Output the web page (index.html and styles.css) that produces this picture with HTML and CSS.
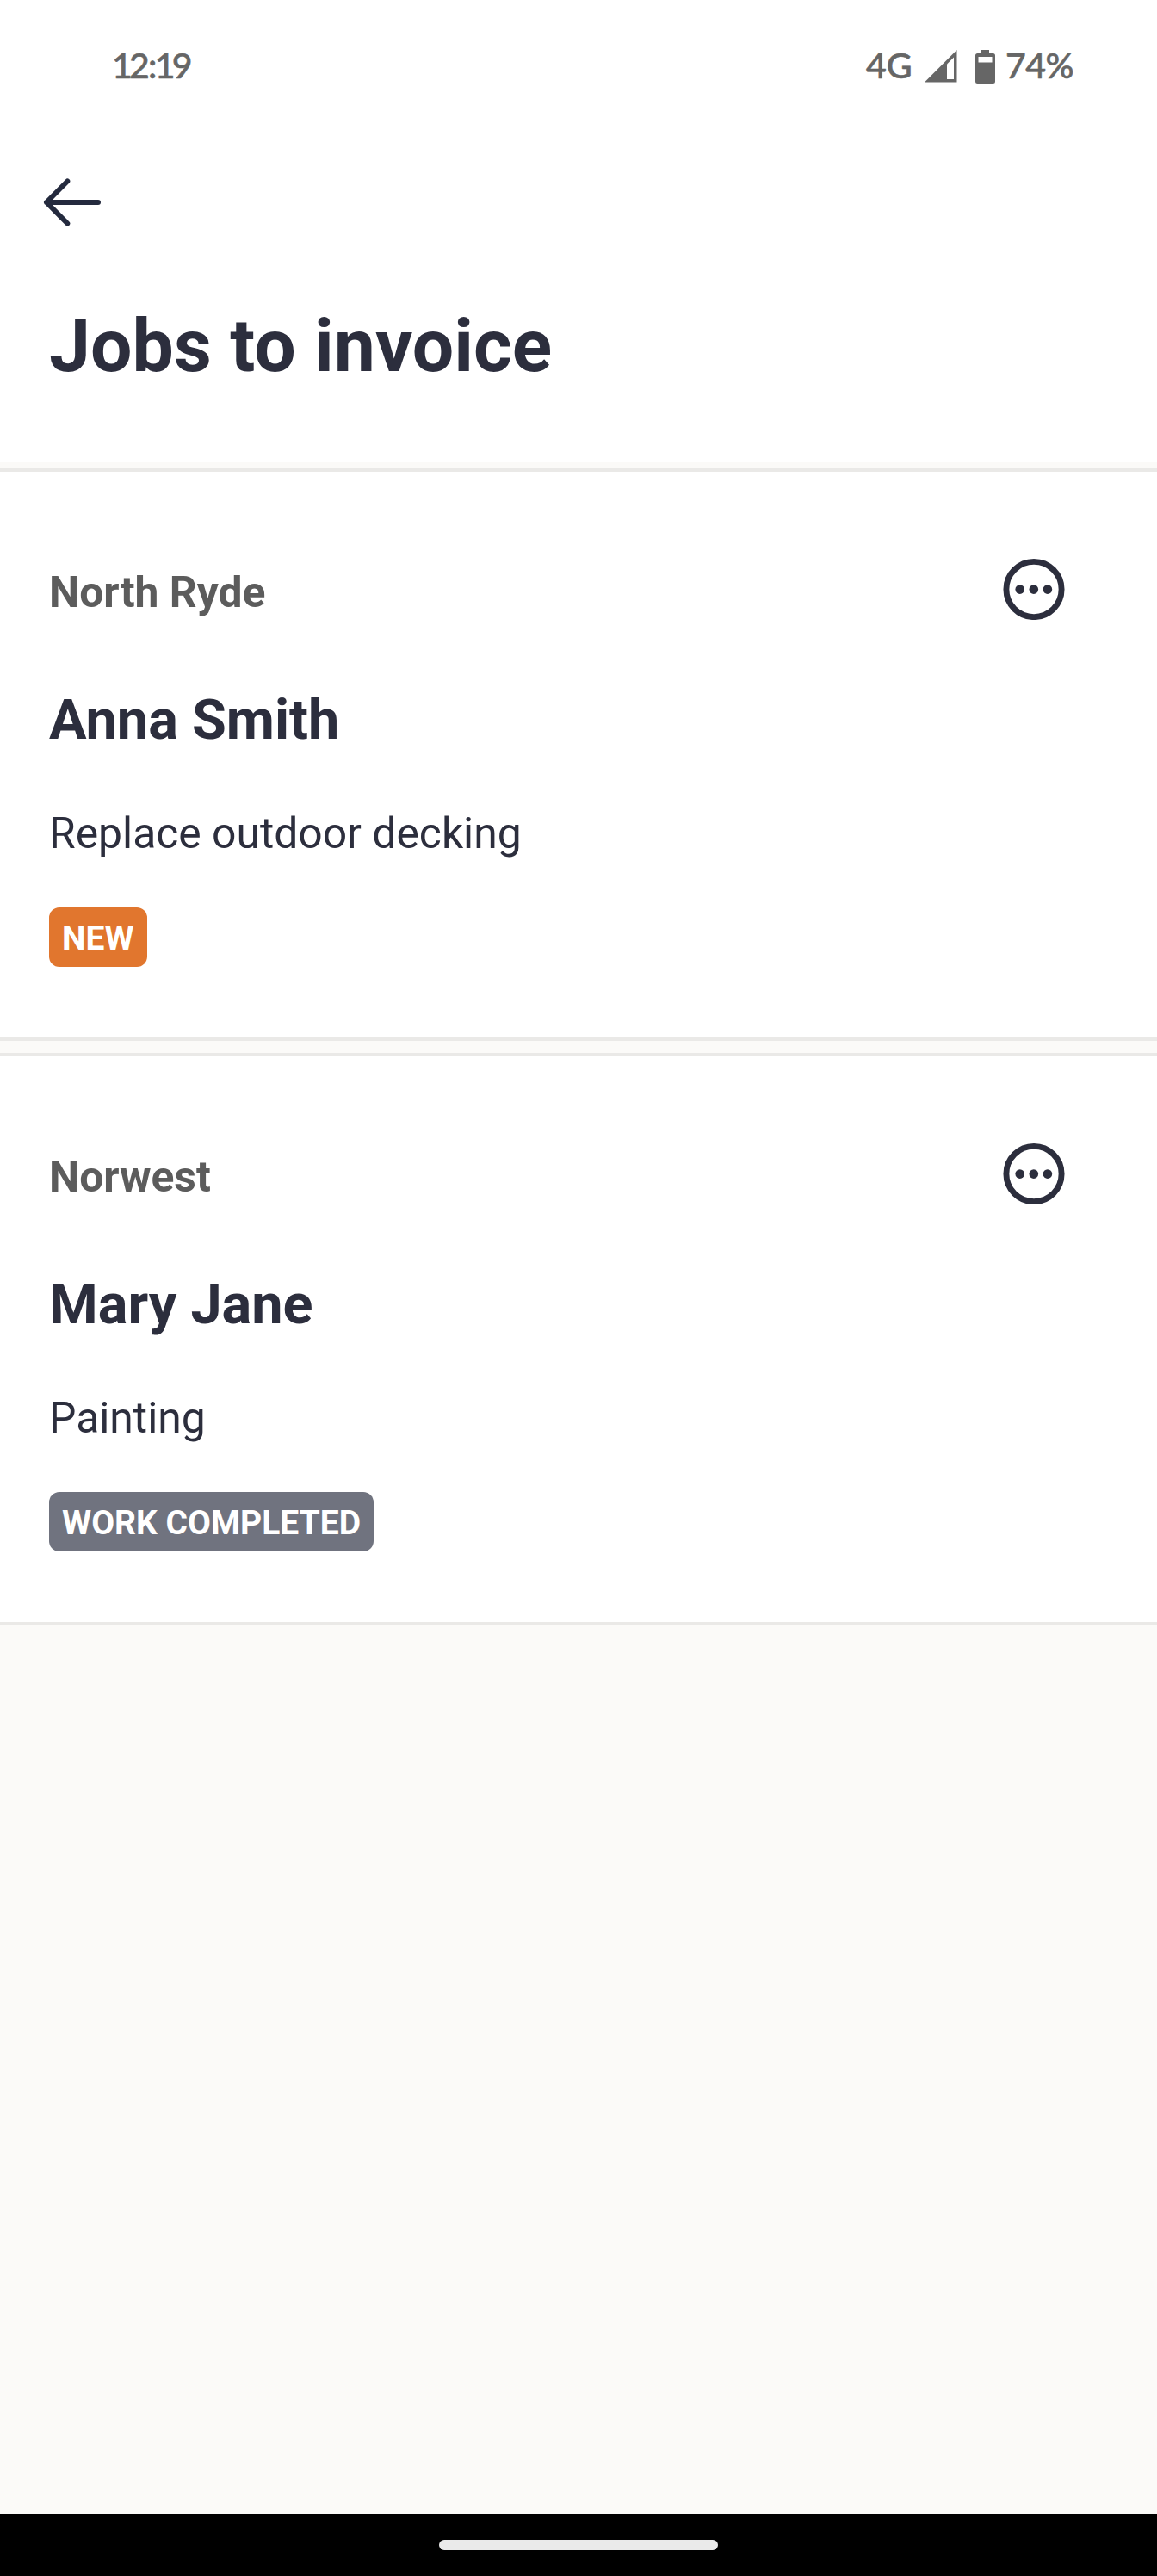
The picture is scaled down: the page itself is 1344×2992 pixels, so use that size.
FILE: index.html
```html
<!DOCTYPE html>
<html lang="en">
<head>
<meta charset="utf-8">
<title>Jobs to invoice</title>
<link rel="stylesheet" href="styles.css">
</head>
<body>
<header class="header">
  <div class="status">
    <span class="clock">12<span class="colon">:</span>19</span>
    <div class="indicators">
      <span class="network">4G</span>
      <svg class="signal" width="38" height="38" viewBox="0 0 38 38"><path d="M37.500 0V37.500H0Z" fill="#666"/><path d="M34 8.500V34H26V16.500Z" fill="#fff"/></svg>
      <svg class="battery" width="23" height="39" viewBox="0 0 23 39"><path d="M7 0h9v4h4.500q2.500 0 2.500 2.500v30q0 2.500-2.500 2.500h-18Q0 39 0 36.500v-30Q0 4 2.500 4H7Z" fill="#666"/><path d="M3.500 8h16v6.500h-16Z" fill="#fff"/></svg>
      <span class="level">74%</span>
    </div>
  </div>
  <svg class="back" width="72" height="60" viewBox="0 0 72 60"><path d="M30.300 5.500L6 30L30.300 54.500M6 30H66" fill="none" stroke="#242a3e" stroke-width="6" stroke-linecap="round" stroke-linejoin="round"/></svg>
  <h1 class="title">Jobs to invoice</h1>
</header>
<main>
  <article class="job">
    <div class="top"><span class="suburb">North Ryde</span>
      <svg class="more" width="72" height="72" viewBox="0 0 72 72"><circle cx="36" cy="36.500" r="32.100" fill="none" stroke="#2c2e3d" stroke-width="6.900"/><g fill="#2c2e3d"><circle cx="19.700" cy="36.600" r="5.300"/><circle cx="35.800" cy="36.600" r="5.300"/><circle cx="51.900" cy="36.600" r="5.300"/></g></svg></div>
    <h2 class="name">Anna Smith</h2>
    <p class="task">Replace outdoor decking</p>
    <div class="badge new">NEW</div>
  </article>
  <article class="job">
    <div class="top"><span class="suburb">Norwest</span>
      <svg class="more" width="72" height="72" viewBox="0 0 72 72"><circle cx="36" cy="36.500" r="32.100" fill="none" stroke="#2c2e3d" stroke-width="6.900"/><g fill="#2c2e3d"><circle cx="19.700" cy="36.600" r="5.300"/><circle cx="35.800" cy="36.600" r="5.300"/><circle cx="51.900" cy="36.600" r="5.300"/></g></svg></div>
    <h2 class="name">Mary Jane</h2>
    <p class="task">Painting</p>
    <div class="badge done">WORK COMPLETED</div>
  </article>
</main>
<footer class="nav"><div class="handle"></div></footer>
</body>
</html>
```

FILE: styles.css
```css
* { box-sizing: border-box; }
body { margin: 0; height: 2992px; display: flex; flex-direction: column; background: #fbfaf8; font-family: Roboto, sans-serif; color: #2c2e3d; }
.header { height: 537px; background: #fff; }
.status { height: 156px; padding: 0 94px 4px 130px; display: flex; justify-content: space-between; align-items: center; font-family: Lato, sans-serif; font-size: 41px; line-height: 50px; font-weight: 500; color: #666; -webkit-text-stroke: 0.6px #666; }
.clock { letter-spacing: -3.8px; }
.colon { margin: 0 0 0 2px; letter-spacing: -2.5px; }
.indicators { display: flex; align-items: center; }
.network { width: 68px; }
.signal { margin-top: 2px; }
.battery { margin: 2px 12px 0 21px; }
.level { width: 82px; letter-spacing: -0.5px; }
.back { display: block; margin: 49px 0 0 48px; }
.title { margin: 87px 0 0 57px; font-size: 85.9px; line-height: 100px; font-weight: 700; }
main { flex: 1; padding-top: 7px; }
.job { height: 665px; margin-bottom: 14px; padding: 100px 107px 0 57px; background: #fff; border: solid #eae9e7; border-width: 4px 0; }
.top { height: 72px; display: flex; justify-content: space-between; align-items: flex-start; }
.suburb { padding-top: 4px; font-size: 49.8px; line-height: 72px; font-weight: 700; color: #5c5c5c; }
.name { margin: 76px 0 0; font-size: 64.8px; line-height: 80px; }
.task { margin: 57px 0 0; font-size: 49.8px; line-height: 70px; }
.badge { width: fit-content; margin-top: 51px; height: 69px; padding: 0 15px; border-radius: 12px; color: #fff; font-size: 39px; line-height: 72px; font-weight: 700; }
.new { background: #e1762e; }
.done { background: #70737f; }
.nav { height: 72px; background: #000; padding-top: 30px; }
.handle { width: 324px; height: 12px; margin: 0 auto; border-radius: 6px; background: #eaeaea; }
```
